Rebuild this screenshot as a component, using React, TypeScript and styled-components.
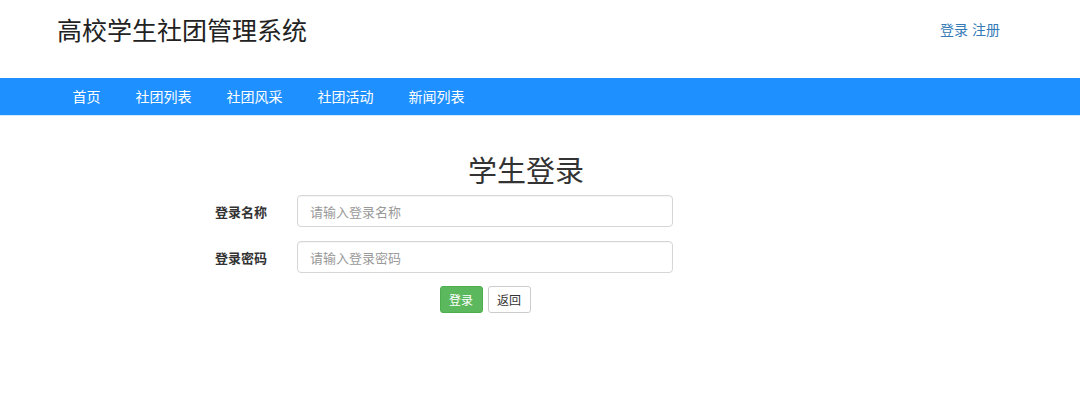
import React from 'react';
import styled, { createGlobalStyle } from 'styled-components';

const GlobalStyle = createGlobalStyle`
  html, body {
    margin: 0;
    padding: 0;
    background: #fff;
  }
  body {
    font-family: "Noto Sans CJK SC", "Noto Sans", "Liberation Sans", sans-serif;
    color: #333;
  }
  * {
    box-sizing: border-box;
  }
`;

const Header = styled.header`
  height: 78px;
  padding: 0 80px 20px 57px;
  display: flex;
  align-items: center;
  justify-content: space-between;
`;

const SiteTitle = styled.h1`
  margin: 0;
  font-size: 25px;
  line-height: 26px;
  font-weight: 400;
  color: #222;
`;

const UserLinks = styled.div`
  display: flex;
  gap: 4px;
  font-size: 14px;
  line-height: 14px;
`;

const UserLink = styled.a`
  color: #337ab7;
  text-decoration: none;
  cursor: pointer;
`;

const NavBar = styled.nav`
  height: 38px;
  background: #1e90ff;
  border-bottom: 1px solid #d6e8fb;
  display: flex;
  align-items: center;
  padding-left: 55px;
`;

const NavItem = styled.a`
  padding: 0 17.5px;
  color: #fff;
  font-size: 14px;
  line-height: 37px;
  text-decoration: none;
  cursor: pointer;
`;

const Main = styled.main`
  padding-top: 38px;
`;

const Heading = styled.h2`
  margin: 0 0 11px;
  padding-right: 28px;
  text-align: center;
  font-size: 29px;
  line-height: 30px;
  font-weight: 400;
  color: #333;
`;

const Form = styled.form`
  margin-left: 215px;
  width: 458px;
  display: flex;
  flex-direction: column;
  gap: 14px;
`;

const Row = styled.div`
  display: grid;
  grid-template-columns: 82px 376px;
  align-items: center;
`;

const Label = styled.label`
  font-size: 13px;
  font-weight: 700;
  color: #333;
`;

const Input = styled.input`
  width: 376px;
  height: 32px;
  padding: 0 12px;
  border: 1px solid #d6d6d6;
  border-radius: 4px;
  box-shadow: inset 0 1px 1px rgba(0, 0, 0, 0.04);
  font-family: inherit;
  font-size: 13px;
  color: #555;
  outline: none;

  &::placeholder {
    color: #999;
  }
`;

const Actions = styled.div`
  margin-left: 82px;
  margin-top: -1px;
  display: flex;
  justify-content: center;
  gap: 5px;
`;

const Button = styled.button<{ $primary?: boolean }>`
  width: 43px;
  height: 27px;
  padding: 0;
  border-radius: 3px;
  border: 1px solid ${(p) => (p.$primary ? '#4cae4c' : '#ccc')};
  background: ${(p) => (p.$primary ? '#5cb85c' : '#fff')};
  color: ${(p) => (p.$primary ? '#fff' : '#333')};
  font-family: inherit;
  font-size: 12px;
  cursor: pointer;
`;

const navItems = ['首页', '社团列表', '社团风采', '社团活动', '新闻列表'];

export default function App() {
  return (
    <>
      <GlobalStyle />
      <Header>
        <SiteTitle>高校学生社团管理系统</SiteTitle>
        <UserLinks>
          <UserLink>登录</UserLink>
          <UserLink>注册</UserLink>
        </UserLinks>
      </Header>
      <NavBar>
        {navItems.map((item) => (
          <NavItem key={item}>{item}</NavItem>
        ))}
      </NavBar>
      <Main>
        <Heading>学生登录</Heading>
        <Form onSubmit={(e) => e.preventDefault()}>
          <Row>
            <Label>登录名称</Label>
            <Input placeholder="请输入登录名称" />
          </Row>
          <Row>
            <Label>登录密码</Label>
            <Input type="password" placeholder="请输入登录密码" />
          </Row>
          <Actions>
            <Button $primary type="submit">登录</Button>
            <Button type="button">返回</Button>
          </Actions>
        </Form>
      </Main>
    </>
  );
}
